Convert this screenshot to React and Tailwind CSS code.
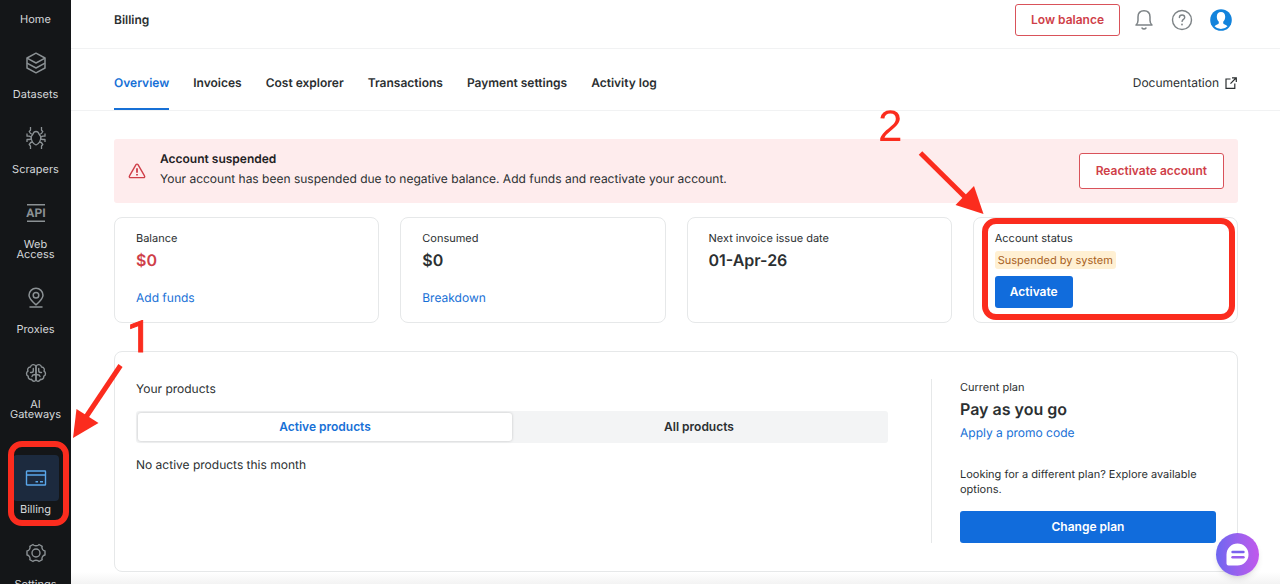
import React from "react";

const DatasetsIcon = () => (
  <svg width="22" height="22" viewBox="0 0 22 22" fill="none" stroke="currentColor" strokeWidth="1.5" strokeLinejoin="round">
    <path d="M11 1.200 20 6v10l-9 4.800L2 16V6z" />
    <path d="M2 6.200 11 11l9-4.800M2 11.200 11 16l9-4.800" />
  </svg>
);

const ScrapersIcon = () => (
  <svg width="20" height="24" viewBox="0 0 20 24" fill="none" stroke="currentColor" strokeWidth="1.300" strokeLinejoin="round">
    <path d="M10 5.500c1.800 0 2.600 1.200 3 2.700l1.700 2.300c.5 3.800-1.500 7.500-4.700 8.500-3.200-1-5.200-4.700-4.700-8.500L7 8.200c.4-1.500 1.200-2.700 3-2.700z" />
    <path d="M4.500 1v3.200L3.200 5.500l1.300 2L6.800 8.500M1 7.500v2.700h2.300l2 1M1 16v-2.500h2.300l2-.5M4.500 23v-3l-1.300-1.500 1.500-2 2-.5" />
    <path d="M15.500 1v3.200l1.300 1.300-1.300 2-2.300 1M19 7.500v2.700h-2.300l-2 1M19 16v-2.500h-2.300l-2-.5M15.500 23v-3l1.300-1.500-1.500-2-2-.5" />
  </svg>
);

const ApiIcon = () => (
  <svg width="20" height="20" viewBox="0 0 20 20" fill="none" stroke="currentColor" strokeWidth="1.500">
    <path d="M1 1.700h18M1 18.300h18" />
    <text x="10" y="14.200" textAnchor="middle" fill="currentColor" stroke="none" fontSize="12" fontWeight="700" fontFamily="Roboto, sans-serif">
      API
    </text>
  </svg>
);

const ProxiesIcon = () => (
  <svg width="18" height="22" viewBox="0 0 18 22" fill="none" stroke="currentColor" strokeWidth="1.500" strokeLinecap="round" strokeLinejoin="round">
    <path d="M9 17.800C5 14.500 2 11.500 2 8.300a7 7 0 0 1 14 0c0 3.200-3 6.200-7 9.500z" />
    <circle cx="9" cy="8.300" r="2.800" />
    <path d="M3 20h12" />
  </svg>
);

const BrainIcon = () => (
  <svg width="22" height="20" viewBox="0 0 22 20" fill="none" stroke="currentColor" strokeWidth="1.400" strokeLinecap="round" strokeLinejoin="round">
    <path d="M11 3.200C9.500.8 6 1.100 5.500 4 3 4 2 6.500 3 8.200 1 9.200 1 12.300 3.200 13.200 3 15.800 5 16.800 6.500 16.300 7.500 18.800 10 18.800 11 17z" />
    <path d="M11 3.200c1.500-2.400 5-2.100 5.500.8 2.500 0 3.500 2.500 2.500 4.200 2 1 2 4.100-.2 5 .2 2.600-1.800 3.600-3.300 3.100-1 2.500-3.500 2.500-4.500.7z" />
    <path d="M8.300 5.500v2.200c0 1-.8 1.800-2 1.800H5.500M13.700 5.500v2.200c0 1 .8 1.800 2 1.800h.8M7 13.500c.2-1.200 1.200-1.800 2.200-1.800H11M15 13.500c-.2-1.200-1.200-1.800-2.200-1.800H11" />
  </svg>
);

const CardIcon = () => (
  <svg width="22" height="16" viewBox="0 0 22 16" fill="none" stroke="currentColor" strokeWidth="1.400" strokeLinejoin="round">
    <rect x="1.500" y="1" width="19" height="14" rx=".5" />
    <path d="M1.500 5h19M10.500 11.800h2.500M15 11.800h3" />
  </svg>
);

const GearIcon = () => (
  <svg width="20" height="20" viewBox="0 0 20 20" fill="none" stroke="currentColor" strokeWidth="1.400" strokeLinejoin="round">
    <path d="M7 1.500c1 1.600 5 1.600 6 0l3.200 1.800c-.9 1.800.6 4.500 2.800 4.700v4c-2.200.2-3.700 2.900-2.800 4.700L13 18.500c-1-1.600-5-1.600-6 0l-3.200-1.800C4.700 14.900 3.200 12.200 1 12V8c2.200-.2 3.700-2.900 2.800-4.700z" />
    <circle cx="10" cy="10" r="4" />
  </svg>
);

const BellIcon = () => (
  <svg width="20" height="22" viewBox="0 0 20 22" fill="none" stroke="currentColor" strokeWidth="1.500" strokeLinecap="round" strokeLinejoin="round">
    <path d="M2 16h16c-1.500-1.200-2-2.500-2-4.500V8c0-3.800-2.300-6.300-6-6.300S4 4.200 4 8v3.500c0 2-.5 3.300-2 4.500z" />
    <path d="M8 19c1 1.300 3 1.300 4 0" />
  </svg>
);

const HelpIcon = () => (
  <svg width="22" height="22" viewBox="0 0 22 22" fill="none" stroke="currentColor" strokeWidth="1.400" strokeLinecap="round">
    <circle cx="11" cy="11" r="9.500" />
    <path d="M8.400 8.600c0-1.500 1.100-2.600 2.700-2.600s2.600 1 2.600 2.400c0 1.900-2.600 2-2.600 4" />
    <circle cx="11" cy="15.500" r=".9" fill="currentColor" stroke="none" />
  </svg>
);

const AvatarIcon = () => (
  <svg width="22" height="22" viewBox="0 0 22 22">
    <circle cx="11" cy="11" r="10.800" fill="#1283dc" />
    <path
      fill="#fff"
      d="M11 3c2.700 0 4.200 1.800 4.200 4.700 0 2-.9 4-2 5v1.500c.2 1.200 2.800 1.400 4.300 3A9 9 0 0 1 11 20a9 9 0 0 1-6.500-2.800c1.500-1.600 4.100-1.800 4.300-3v-1.500c-1.100-1-2-3-2-5C6.800 4.800 8.300 3 11 3z"
    />
  </svg>
);

const ExternalIcon = () => (
  <svg width="12" height="12" viewBox="0 0 12 12" fill="none" stroke="currentColor" strokeWidth="1.200">
    <path d="M5.500 2H1v9.300h8.800V6.500M7 .8h4.300V5M11 1 5.500 6.700" />
  </svg>
);

const WarningIcon = () => (
  <svg width="18" height="16" viewBox="0 0 18 16" fill="none" stroke="currentColor" strokeWidth="1.400" strokeLinejoin="round" className="shrink-0">
    <path d="M8 1.700c.5-.8 1.500-.8 2 0l6.500 11.200c.5.800 0 1.700-.9 1.700H2.400c-.9 0-1.400-.9-.9-1.700z" />
    <path d="M9 5.200v4.500M9 11v1.600" strokeWidth="1.800" />
  </svg>
);

const navItems = [
  { label: "Datasets", icon: DatasetsIcon },
  { label: "Scrapers", icon: ScrapersIcon },
  { label: "Web Access", icon: ApiIcon },
  { label: "Proxies", icon: ProxiesIcon },
  { label: "AI Gateways", icon: BrainIcon },
  { label: "Billing", icon: CardIcon, active: true },
  { label: "Settings", icon: GearIcon },
];

const tabs = ["Overview", "Invoices", "Cost explorer", "Transactions", "Payment settings", "Activity log"];

const stats = [
  { label: "Balance", value: "$0", link: "Add funds", danger: true },
  { label: "Consumed", value: "$0", link: "Breakdown" },
  { label: "Next invoice issue date", value: "01-Apr-26" },
];

const Sidebar = () => (
  <nav className="w-[71px] shrink-0 overflow-hidden bg-[#141618] pt-3.5 text-center text-[11px] leading-[10px] text-[#d5d8da]">
    <ul className="flex flex-col gap-4">
      <li>
        <a href="#home">Home</a>
      </li>
      {navItems.map(({ label, icon: Icon, active }) => (
        <li key={label} className={active ? "relative mt-5" : ""}>
          <a href={"#" + label} className="flex flex-col items-center gap-[3px]">
            <span
              className={
                "grid size-[46px] place-items-center rounded-sm " +
                (active ? "bg-[#1c2a3e] text-[#5aa7ea]" : "text-[#8b9194]")
              }
            >
              <Icon />
            </span>
            <span className="w-14">{label}</span>
          </a>
          {active && (
            <span className="pointer-events-none absolute -top-3.5 -bottom-3 left-2 right-0.5 rounded-[14px] border-6 border-[#fb2c1e]" />
          )}
        </li>
      ))}
    </ul>
  </nav>
);

const Header = () => (
  <header className="flex items-center justify-between border-b border-[#f1f2f3] pt-1 pb-3 pl-[43px] pr-12">
    <h1 className="text-xs font-semibold">Billing</h1>
    <div className="flex items-center text-[#7d8386]">
      <button className="h-8 rounded-[3px] border border-[#d9525a] px-[15px] text-xs font-semibold text-[#cf3f49]">
        Low balance
      </button>
      <button aria-label="Notifications" className="ml-3.5">
        <BellIcon />
      </button>
      <button aria-label="Help" className="ml-[17px]">
        <HelpIcon />
      </button>
      <button aria-label="Account" className="ml-[17px]">
        <AvatarIcon />
      </button>
    </div>
  </header>
);

const Tabs = () => (
  <div className="flex items-start justify-between border-b border-[#f1f2f3] px-[43px] text-xs leading-5">
    <div className="flex gap-6 font-semibold">
      {tabs.map((t, i) => (
        <a
          key={t}
          href={"#" + t}
          className={"border-b-2 pt-6 pb-[15px] " + (i === 0 ? "border-[#1770d6] text-[#1770d6]" : "border-transparent")}
        >
          {t}
        </a>
      ))}
    </div>
    <a href="#docs" className="flex items-center gap-1.5 pt-6">
      Documentation <ExternalIcon />
    </a>
  </div>
);

const Alert = () => (
  <div className="flex items-center rounded-[3px] bg-[#feeced] px-3.5 py-2.5 text-xs text-[#cf3f49]">
    <WarningIcon />
    <div className="ml-3.5 flex-1 pb-1 leading-5 text-[#2b2f31]">
      <p className="font-semibold text-[#1f2224]">Account suspended</p>
      <p>Your account has been suspended due to negative balance. Add funds and reactivate your account.</p>
    </div>
    <button className="h-9 rounded-[3px] border border-[#d9525a] bg-white px-4 font-semibold">
      Reactivate account
    </button>
  </div>
);

const StatCard = ({ s }) => (
  <div className="rounded-lg border border-[#e6e8e9] px-[21px] pt-3 pb-3.5">
    <p className="text-[11px] leading-4">{s.label}</p>
    <p className={"mt-0.5 text-base font-semibold " + (s.danger ? "text-[#cf3f49]" : "")}>{s.value}</p>
    {s.link && (
      <a href={"#" + s.link} className="mt-[18px] block text-xs leading-4 text-[#1770d6]">
        {s.link}
      </a>
    )}
  </div>
);

const StatusCard = () => (
  <div className="relative rounded-lg border border-[#e6e8e9] px-[21px] pt-3 pb-3.5">
    <p className="text-[11px] leading-4">Account status</p>
    <span className="mt-[5px] block w-fit rounded-[3px] bg-[#fff0d3] px-[3px] text-[11px] leading-[18px] text-[#a8601c]">
      Suspended by system
    </span>
    <button className="mt-[7px] h-8 rounded-[3px] bg-[#116cdc] px-[15px] text-xs font-semibold text-white">
      Activate
    </button>
    <span className="pointer-events-none absolute top-0 right-0.5 bottom-0.5 left-2 rounded-[14px] border-6 border-[#fb2c1e]" />
  </div>
);

const Products = () => (
  <div className="flex-1 pr-[43px] text-xs leading-5">
    <h2>Your products</h2>
    <div className="mt-3 grid grid-cols-2 rounded-[3px] bg-[#f3f4f5] p-0.5 font-semibold">
      <button className="h-7 rounded-[3px] bg-white text-[#1770d6] shadow-[0_0_3px_rgba(0,0,0,0.2)]">
        Active products
      </button>
      <button className="h-7">All products</button>
    </div>
    <p className="mt-3">No active products this month</p>
  </div>
);

const Plan = () => (
  <div className="w-[285px] border-l border-[#e6e8e9] pl-7">
    <p className="text-[11px] leading-4">Current plan</p>
    <h2 className="mt-0.5 text-base font-semibold">Pay as you go</h2>
    <a href="#promo" className="mt-0.5 block text-xs leading-5 text-[#1770d6]">
      Apply a promo code
    </a>
    <p className="mt-6 text-[11px] leading-[15px]">Looking for a different plan? Explore available options.</p>
    <button className="mt-3.5 h-8 w-full rounded-[3px] bg-[#116cdc] text-xs font-semibold text-white">
      Change plan
    </button>
  </div>
);

const ChatButton = () => (
  <button
    aria-label="Open chat"
    className="fixed right-[21px] bottom-2 grid size-[43px] place-items-center rounded-full bg-linear-to-r from-[#6d66f0] to-[#c058ec] shadow-md"
  >
    <svg width="23" height="23" viewBox="0 0 23 23">
      <path d="M11.500.5a11 11 0 0 1 0 22H2.500a2 2 0 0 1-2-2v-9a11 11 0 0 1 11-11z" fill="#fff" />
      <path d="M6.500 9h11" stroke="#7a62ee" strokeWidth="2.400" strokeLinecap="round" />
      <path d="M6.500 14.300h11" stroke="#9a5eec" strokeWidth="2.400" strokeLinecap="round" />
    </svg>
  </button>
);

// numbered steps drawn on top of the page
const Steps = () => (
  <svg
    width="1280"
    height="584"
    className="pointer-events-none absolute top-0 left-0"
    fill="#fb2c1e"
    stroke="#fb2c1e"
    fontSize="44"
  >
    <text x="127" y="352" strokeWidth="1" fontFamily="Roboto, sans-serif">
      1
    </text>
    <text x="878" y="141" stroke="none" fontFamily="Liberation Sans, sans-serif">
      2
    </text>
    <path d="M120.500 365.500 86 417" strokeWidth="5" />
    <path d="M73 438 76.500 409 98.500 423z" stroke="none" />
    <path d="M920.500 153 966 198" strokeWidth="5" />
    <path d="M983.500 214 974 186 955.500 205z" stroke="none" />
  </svg>
);

const App = () => {
  return (
    <div className="relative flex h-screen overflow-hidden bg-white font-[Inter,sans-serif] text-[#2b2f31] [text-rendering:geometricPrecision]">
      <Sidebar />
      <main className="flex min-w-0 flex-1 flex-col">
        <Header />
        <Tabs />
        <div className="flex flex-col pt-7 pl-[43px] pr-[42px]">
          <Alert />
          <div className="mt-3.5 grid grid-cols-4 gap-[21px]">
            {stats.map((s) => (
              <StatCard key={s.label} s={s} />
            ))}
            <StatusCard />
          </div>
          <section className="mt-7 flex rounded-lg border border-[#e6e8e9] px-[21px] pt-[27px] pb-7">
            <Products />
            <Plan />
          </section>
        </div>
        <div className="flex-1 bg-linear-to-b from-white to-[#f3f3f3]" />
      </main>
      <ChatButton />
      <Steps />
    </div>
  );
};

export default App;
